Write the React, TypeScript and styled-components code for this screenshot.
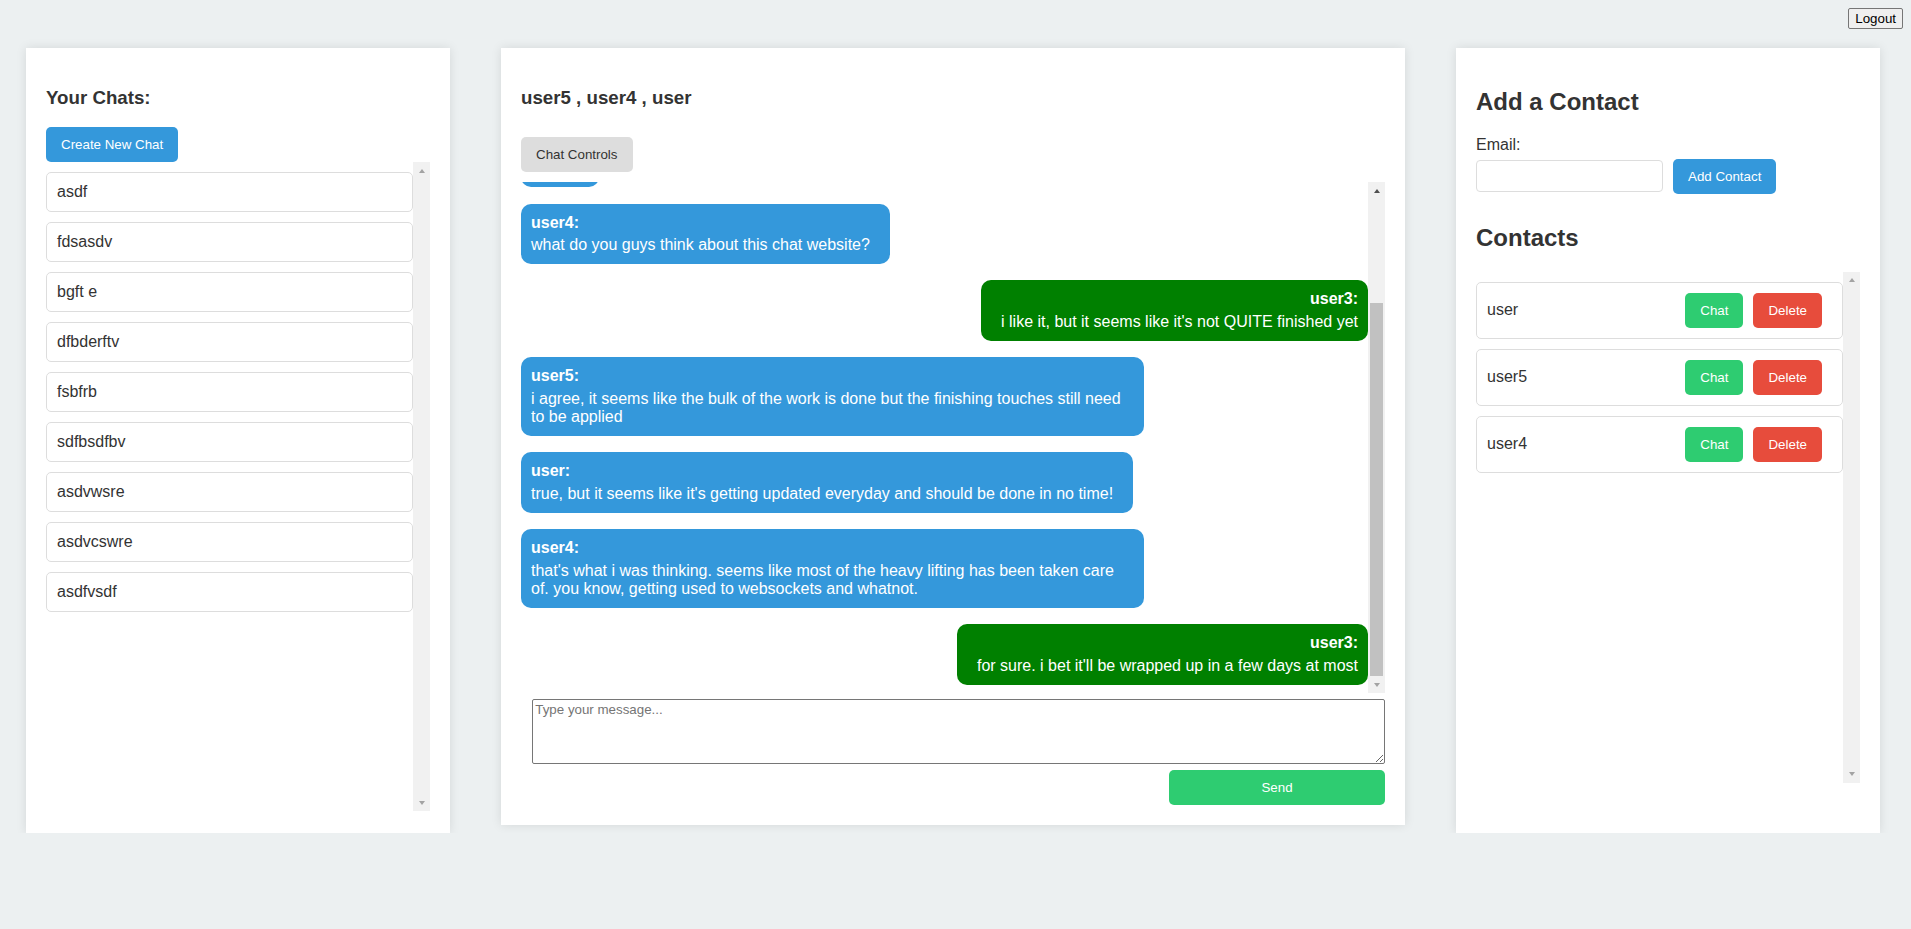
import React, { useLayoutEffect, useRef, useState } from "react";
import styled, { createGlobalStyle } from "styled-components";

type Message = { sender: string; text: string };
type Metrics = { top: number; total: number; view: number };

const CURRENT_USER = "user3";

const chats = [
  "asdf",
  "fdsasdv",
  "bgft e",
  "dfbderftv",
  "fsbfrb",
  "sdfbsdfbv",
  "asdvwsre",
  "asdvcswre",
  "asdfvsdf",
];

const contacts = ["user", "user5", "user4"];

const messages: Message[] = [
  { sender: "user3", text: "hello everyone" },
  { sender: "user5", text: "hey!" },
  { sender: "user4", text: "what do you guys think about this chat website?" },
  {
    sender: "user3",
    text: "i like it, but it seems like it's not QUITE finished yet",
  },
  {
    sender: "user5",
    text: "i agree, it seems like the bulk of the work is done but the finishing touches still need to be applied",
  },
  {
    sender: "user",
    text: "true, but it seems like it's getting updated everyday and should be done in no time!",
  },
  {
    sender: "user4",
    text: "that's what i was thinking. seems like most of the heavy lifting has been taken care of. you know, getting used to websockets and whatnot.",
  },
  {
    sender: "user3",
    text: "for sure. i bet it'll be wrapped up in a few days at most",
  },
];

// keeps track of a scroll box so the drawn scrollbar can follow it
const useScrollMetrics = (toBottom: boolean) => {
  const ref = useRef<HTMLDivElement>(null);
  const [metrics, setMetrics] = useState<Metrics | null>(null);

  useLayoutEffect(() => {
    const el = ref.current;
    if (!el) return;
    if (toBottom) el.scrollTop = el.scrollHeight;
    const update = () =>
      setMetrics({
        top: el.scrollTop,
        total: el.scrollHeight,
        view: el.clientHeight,
      });
    update();
    el.addEventListener("scroll", update);
    return () => el.removeEventListener("scroll", update);
  }, [toBottom]);

  return [ref, metrics] as const;
};

const ScrollBar: React.FC<{ metrics: Metrics | null }> = ({ metrics }) => {
  const scrollable = !!metrics && metrics.total > metrics.view + 1;
  const track = metrics ? metrics.view - 34 : 0;
  const thumbHeight = scrollable ? (track * metrics!.view) / metrics!.total : 0;
  const thumbTop = scrollable ? (track * metrics!.top) / metrics!.total : 0;
  const atTop = !scrollable || metrics!.top <= 0;
  const atBottom =
    !scrollable || metrics!.top + metrics!.view >= metrics!.total - 1;

  return (
    <ScrollBarStyled>
      <ArrowBoxStyled>
        <ArrowStyled $dir="up" $active={!atTop} />
      </ArrowBoxStyled>
      <TrackStyled>
        {scrollable && (
          <ThumbStyled style={{ marginTop: thumbTop, height: thumbHeight }} />
        )}
      </TrackStyled>
      <ArrowBoxStyled>
        <ArrowStyled $dir="down" $active={!atBottom} />
      </ArrowBoxStyled>
    </ScrollBarStyled>
  );
};

const App: React.FC = () => {
  const [chatsRef, chatsMetrics] = useScrollMetrics(false);
  const [messagesRef, messagesMetrics] = useScrollMetrics(true);
  const [contactsRef, contactsMetrics] = useScrollMetrics(false);

  return (
    <>
      <GlobalStyle />
      <TopBarStyled>
        <LogoutBtnStyled>Logout</LogoutBtnStyled>
      </TopBarStyled>
      <MainStyled>
        <PanelStyled $width={384} $tall>
          <SubTitleStyled>Your Chats:</SubTitleStyled>
          <BlueBtnStyled>Create New Chat</BlueBtnStyled>
          <ScrollFrameStyled $height="70vh">
            <ScrollBodyStyled ref={chatsRef}>
              {chats.map((name) => (
                <ChatItemStyled key={name}>{name}</ChatItemStyled>
              ))}
            </ScrollBodyStyled>
            <ScrollBar metrics={chatsMetrics} />
          </ScrollFrameStyled>
        </PanelStyled>

        <PanelStyled $width={864}>
          <SubTitleStyled>user5 , user4 , user</SubTitleStyled>
          <ControlsBtnStyled>Chat Controls</ControlsBtnStyled>
          <ScrollFrameStyled $height="55vh">
            <MessagesStyled ref={messagesRef}>
              {messages.map((msg, i) => (
                <BubbleStyled key={i} $own={msg.sender === CURRENT_USER}>
                  <SenderStyled>{msg.sender}:</SenderStyled>
                  {msg.text}
                </BubbleStyled>
              ))}
            </MessagesStyled>
            <ScrollBar metrics={messagesMetrics} />
          </ScrollFrameStyled>
          <MessageInputStyled placeholder="Type your message..." />
          <SendBtnStyled>Send</SendBtnStyled>
        </PanelStyled>

        <PanelStyled $width={384} $tall>
          <TitleStyled>Add a Contact</TitleStyled>
          <LabelStyled>Email:</LabelStyled>
          <AddRowStyled>
            <EmailInputStyled type="email" />
            <BlueBtnStyled>Add Contact</BlueBtnStyled>
          </AddRowStyled>
          <TitleStyled>Contacts</TitleStyled>
          <ScrollFrameStyled $height="55vh">
            <ScrollBodyStyled ref={contactsRef}>
              {contacts.map((name) => (
                <ContactItemStyled key={name}>
                  <span>{name}</span>
                  <div>
                    <ActionBtnStyled $variant="chat">Chat</ActionBtnStyled>
                    <ActionBtnStyled $variant="delete">Delete</ActionBtnStyled>
                  </div>
                </ContactItemStyled>
              ))}
            </ScrollBodyStyled>
            <ScrollBar metrics={contactsMetrics} />
          </ScrollFrameStyled>
        </PanelStyled>
      </MainStyled>
    </>
  );
};

const GlobalStyle = createGlobalStyle`
  html, body {
    background-color: #ecf0f1;
  }
  body {
    margin: 8px;
    font-family: "Liberation Sans", Arial, sans-serif;
    color: #333;
  }
`;

const TopBarStyled = styled.header`
  display: flex;
  justify-content: flex-end;
`;

const LogoutBtnStyled = styled.button`
  height: 21px;
  font-family: inherit;
  font-size: 13.333px;
  color: #000;
  background-color: #efefef;
  border: 1px solid #767676;
  border-radius: 2px;
  padding: 1px 6px;
`;

const MainStyled = styled.main`
  display: flex;
  align-items: flex-start;
  gap: 51px;
  padding-left: 18px;
  margin-top: 19px;
`;

const PanelStyled = styled.section<{ $width: number; $tall?: boolean }>`
  width: ${(p) => p.$width}px;
  ${(p) => p.$tall && "height: 80vh;"}
  padding: 20px;
  padding-bottom: ${(p) => (p.$tall ? "21.5px" : "20px")};
  background-color: #fff;
  box-shadow: 0 0 10px rgba(0, 0, 0, 0.1);
  display: flex;
  flex-direction: column;
`;

const SubTitleStyled = styled.h3`
  font-size: 18.72px;
  margin: 18.72px 0;
  color: #333;
`;

const TitleStyled = styled.h2`
  font-size: 24px;
  margin: 19.92px 0;
  color: #333;
`;

const ButtonBase = styled.button`
  font-family: inherit;
  font-size: 13.333px;
  border: none;
  border-radius: 5px;
  padding: 10px 15px;
  color: #fff;
  cursor: pointer;
`;

const BlueBtnStyled = styled(ButtonBase)`
  background-color: #3498db;
  align-self: flex-start;
  flex-shrink: 0;
`;

const ControlsBtnStyled = styled(ButtonBase)`
  background-color: #ddd;
  color: #333;
  align-self: flex-start;
  margin: 10px 0;
`;

const SendBtnStyled = styled(ButtonBase)`
  background-color: #2ecc71;
  align-self: flex-end;
  width: 25%;
  margin-top: 6px;
`;

const ActionBtnStyled = styled(ButtonBase)<{ $variant: "chat" | "delete" }>`
  background-color: ${(p) => (p.$variant === "chat" ? "#2ecc71" : "#e74c3c")};
  margin-right: 10px;
`;

const ScrollFrameStyled = styled.div<{ $height: string }>`
  display: flex;
  height: ${(p) => p.$height};
  min-height: 0;
`;

const ScrollBodyStyled = styled.div`
  flex: 1;
  min-width: 0;
  overflow-y: auto;
  scrollbar-width: none;
`;

const ScrollBarStyled = styled.div`
  width: 17px;
  flex-shrink: 0;
  display: flex;
  flex-direction: column;
  background-color: #f1f1f1;
`;

const ArrowBoxStyled = styled.div`
  height: 17px;
  flex-shrink: 0;
  display: flex;
  align-items: center;
  justify-content: center;
`;

const ArrowStyled = styled.span<{ $dir: "up" | "down"; $active: boolean }>`
  width: 0;
  height: 0;
  border-left: 3.5px solid transparent;
  border-right: 3.5px solid transparent;
  ${(p) =>
    p.$dir === "up"
      ? `border-bottom: 4px solid ${p.$active ? "#505050" : "#a3a3a3"};`
      : `border-top: 4px solid ${p.$active ? "#505050" : "#a3a3a3"};`}
`;

const TrackStyled = styled.div`
  flex: 1;
  min-height: 0;
  display: flex;
  flex-direction: column;
`;

const ThumbStyled = styled.div`
  flex-shrink: 0;
  margin-left: 2px;
  margin-right: 2px;
  background-color: #c1c1c1;
`;

const ChatItemStyled = styled.div`
  padding: 10px;
  margin: 10px 0;
  border: 1px solid #ddd;
  border-radius: 5px;
  font-size: 16px;
  cursor: pointer;
`;

const MessagesStyled = styled(ScrollBodyStyled)`
  display: flex;
  flex-direction: column;
`;

const BubbleStyled = styled.div<{ $own: boolean }>`
  flex-shrink: 0;
  max-width: 70%;
  margin: 8.15px 0;
  padding: ${(p) => (p.$own ? "10px 10px 10px 20px" : "10px 20px 10px 10px")};
  align-self: ${(p) => (p.$own ? "flex-end" : "flex-start")};
  text-align: ${(p) => (p.$own ? "right" : "left")};
  background-color: ${(p) => (p.$own ? "#008000" : "#3498db")};
  color: #fff;
  border-radius: 10px;
  font-size: 16px;
`;

const SenderStyled = styled.strong`
  display: block;
  margin-bottom: 4.7px;
`;

const MessageInputStyled = styled.textarea`
  align-self: flex-end;
  width: 98%;
  height: 59px;
  margin-top: 6px;
  padding: 2px;
  font-family: inherit;
  font-size: 13.333px;
  border: 1px solid #767676;
  border-radius: 2px;
`;

const LabelStyled = styled.label`
  display: block;
  font-size: 16px;
  margin-bottom: 5px;
`;

const AddRowStyled = styled.div`
  display: flex;
  align-items: center;
  gap: 10px;
  margin-bottom: 10px;
`;

const EmailInputStyled = styled.input`
  box-sizing: border-box;
  width: 187px;
  height: 32px;
  padding: 8px;
  font-family: inherit;
  font-size: 13.333px;
  border: 1px solid #ddd;
  border-radius: 4px;
`;

const ContactItemStyled = styled.div`
  display: flex;
  justify-content: space-between;
  align-items: center;
  padding: 10px;
  margin: 10px 0;
  border: 1px solid #ddd;
  border-radius: 5px;
  font-size: 16px;
`;

export default App;
